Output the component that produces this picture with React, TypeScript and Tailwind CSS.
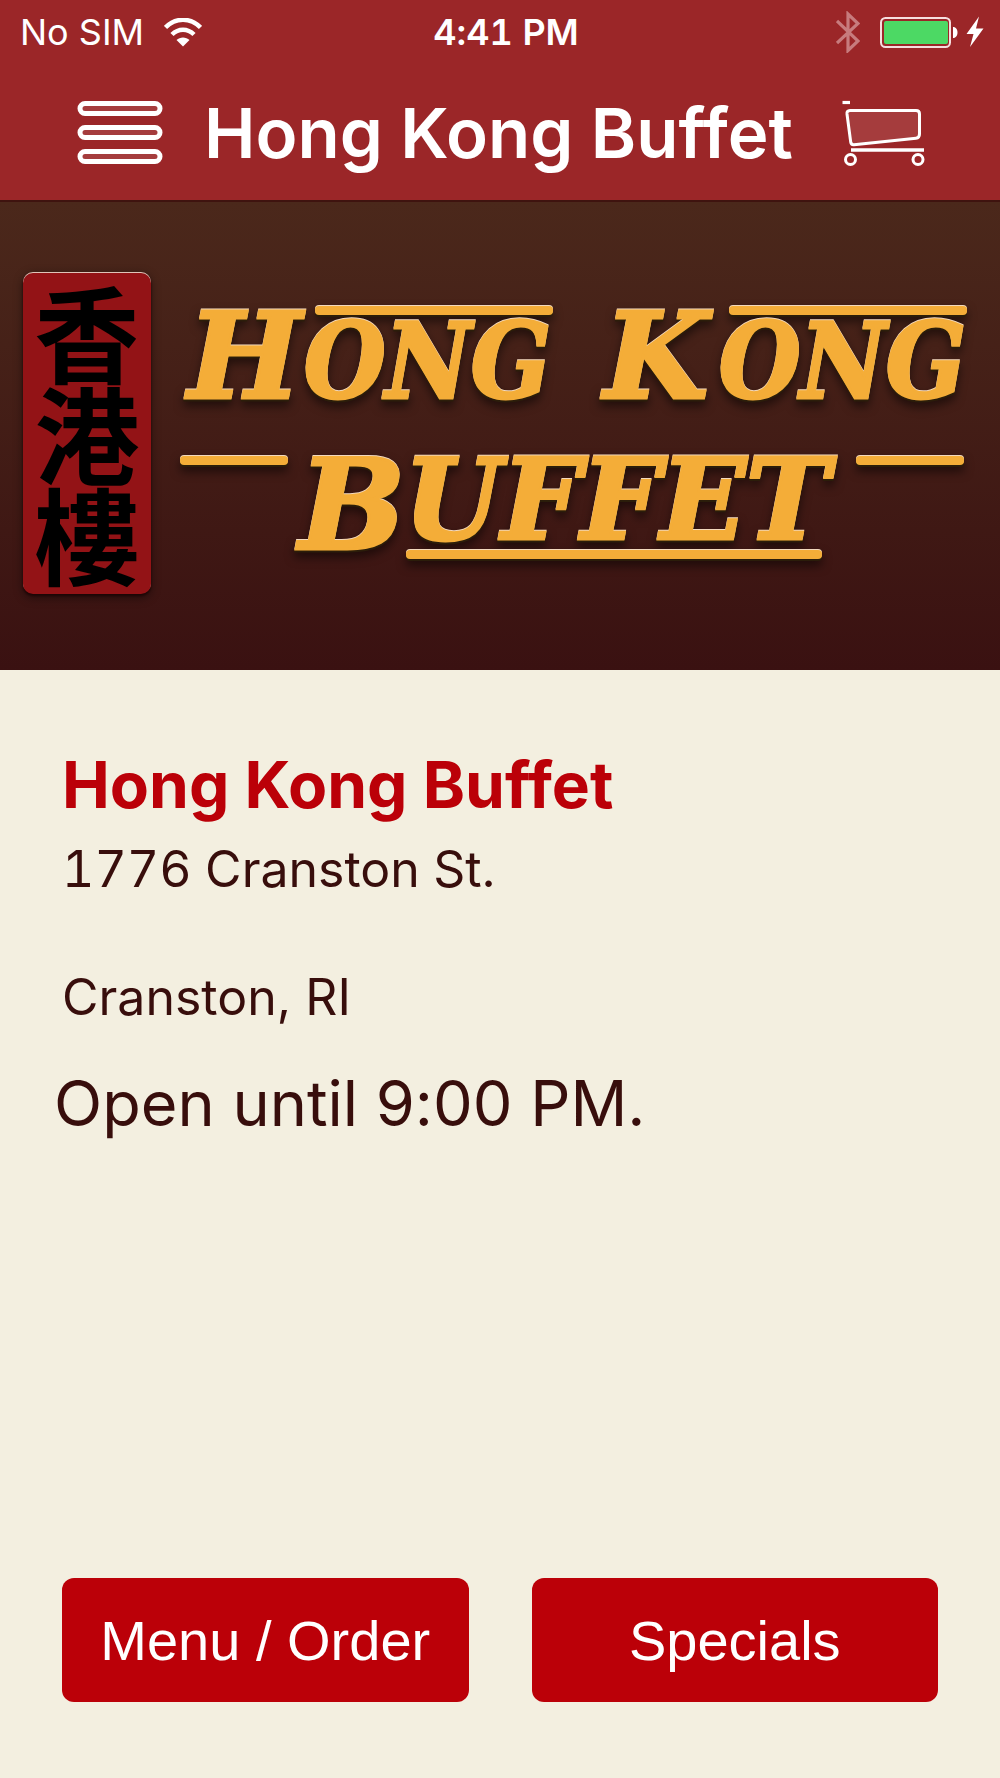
function WifiIcon() {
  return (
    <svg width="38" height="29" viewBox="0 0 38 29" fill="none" aria-label="Wi-Fi" role="img">
      <path d="M1.5 9.5C11.5 -0.8 26.500 -0.8 36.500 9.500" stroke="#fff" strokeWidth="4.500" />
      <path d="M8 16.500C14.500 10 23.500 10 30 16.500" stroke="#fff" strokeWidth="4.500" />
      <path d="M19 28.500L12.500 22C16 18.500 22 18.500 25.500 22Z" fill="#fff" />
    </svg>
  );
}

function BluetoothIcon() {
  return (
    <svg width="24" height="42" viewBox="0 0 24 42" fill="none" aria-label="Bluetooth" role="img">
      <path d="M1 10L22 30L12 39.500V3L22 12.500L1 32" stroke="#c77b7d" strokeWidth="3.200" />
    </svg>
  );
}

function BatteryIcon() {
  return (
    <svg width="78" height="32" viewBox="0 0 78 32" fill="none" aria-label="Battery full" role="img">
      <rect x="1" y="2" width="69" height="29" rx="4.500" stroke="#f6dfdf" strokeWidth="2" />
      <rect x="4" y="5" width="64" height="23" rx="2" fill="#4cd964" />
      <path d="M73 11C79 11 79 22 73 22Z" fill="#fff" />
    </svg>
  );
}

function BoltIcon() {
  return (
    <svg width="18" height="32" viewBox="0 0 18 32" aria-label="Charging" role="img">
      <path d="M13 0.500L0.500 18H7.500L4 31L17.500 12.500H10Z" fill="#fff" />
    </svg>
  );
}

function MenuIcon() {
  return (
    <svg width="86" height="64" viewBox="0 0 86 64" fill="#a53c3d" stroke="#fff" strokeWidth="5" aria-hidden="true">
      <rect x="3" y="3.500" width="80" height="10" rx="5" />
      <rect x="3" y="27.500" width="80" height="10" rx="5" />
      <rect x="3" y="51.500" width="80" height="10" rx="5" />
    </svg>
  );
}

function CartIcon() {
  return (
    <svg width="83" height="66" viewBox="0 0 83 66" fill="none" stroke="#fff" aria-hidden="true">
      <path d="M0.500 2.500H8" strokeWidth="3.200" />
      <path
        d="M8 10.500H74C76.500 10.500 77.500 12 77.500 14V34C77.500 37 76.500 38 74 38.300L12 44.700C10 44.900 9 44 8.700 42L5 14C4.800 12 5.500 10.500 8 10.500Z"
        fill="#a53c3d"
        strokeWidth="3"
      />
      <path d="M9 50H82" strokeWidth="3.400" />
      <circle cx="8.500" cy="59.500" r="5" strokeWidth="3" />
      <circle cx="76" cy="59.500" r="5" strokeWidth="3" />
    </svg>
  );
}

function Logo() {
  return (
    <svg viewBox="0 0 1000 468" className="block w-full" role="img" aria-label="香港樓 Hong Kong Buffet">
      <g className="[filter:drop-shadow(0_-1px_0_#e0c4b8)_drop-shadow(0_2px_1px_#1c0505)_drop-shadow(0_2px_5px_#00000066)]">
        <rect x="23" y="71" width="128" height="321" rx="10" fill="#931316" />
      </g>
      <g className="font-['Noto_Sans_CJK_TC',sans-serif] font-bold" fontSize="105" textAnchor="middle" fill="#000">
        <text x="87" y="173">香</text>
        <text x="87" y="274">港</text>
        <text x="87" y="375">樓</text>
      </g>
      <g
        className="font-['DejaVu_Serif',serif] font-bold italic [filter:drop-shadow(0_-1px_0_#f3d9bd)_drop-shadow(0_2px_0_#2b1d0a)_drop-shadow(0_5px_5px_#00000080)]"
        fill="#f4ad38"
      >
        <g stroke="#f4ad38" strokeWidth="3">
          <text x="188" y="196" fontSize="120">H</text>
          <text x="304" y="196" fontSize="104" className="font-['DejaVu_Serif_Condensed','DejaVu_Serif',serif]">ONG</text>
          <text x="604" y="196" fontSize="120">K</text>
          <text x="719" y="196" fontSize="104" className="font-['DejaVu_Serif_Condensed','DejaVu_Serif',serif]">ONG</text>
          <text x="299" y="347" fontSize="126">B</text>
          <text x="404" y="337" fontSize="112">UFFET</text>
        </g>
        <rect x="315" y="104" width="238" height="9" rx="4" />
        <rect x="729" y="104" width="238" height="9" rx="4" />
        <rect x="180" y="254" width="108" height="9" rx="4" />
        <rect x="856" y="254" width="108" height="9" rx="4" />
        <rect x="406" y="348" width="416" height="9" rx="4" />
      </g>
    </svg>
  );
}

export default function App() {
  return (
    <div className="flex min-h-screen flex-col bg-[#f3efe0] font-['Inter',sans-serif] text-[#380e0c] [font-variant-ligatures:none]">
      <header className="border-b-2 border-[#3f130f] bg-[#9b2628] text-white">
        <div className="grid h-16 grid-cols-[1fr_auto_1fr] items-center pr-4 pl-5 text-4xl">
          <div className="flex items-center gap-5">
            <span>No SIM</span>
            <WifiIcon />
          </div>
          <span className="pl-2 font-semibold tabular-nums">4:41 PM</span>
          <div className="flex items-center justify-end">
            <BluetoothIcon />
            <span className="ml-5 flex items-center gap-2">
              <BatteryIcon />
              <BoltIcon />
            </span>
          </div>
        </div>
        <div className="flex h-[136px] items-start justify-between pt-6 pr-[75px] pl-[77px]">
          <button type="button" aria-label="Open menu" className="mt-3">
            <MenuIcon />
          </button>
          <h1 className="pr-2 text-[69px] leading-[90px] font-semibold whitespace-nowrap">Hong Kong Buffet</h1>
          <button type="button" aria-label="Shopping cart" className="mt-3">
            <CartIcon />
          </button>
        </div>
      </header>

      <section className="bg-linear-to-b from-[#4b281b] to-[#3a1111]">
        <Logo />
      </section>

      <main className="flex flex-1 flex-col px-[62px] pt-[79px] pb-[76px]">
        <h2 className="text-[64px] leading-[72px] font-bold text-[#bb0008]">Hong Kong Buffet</h2>
        <address className="text-[50px] leading-[64px] not-italic">
          <p className="pt-4 tabular-nums">1776 Cranston St.</p>
          <p className="pt-16">Cranston, RI</p>
        </address>
        <p className="-ml-2 pt-[34px] text-[63px] leading-[80px]">Open until 9:00 PM.</p>
        <nav className="mt-auto grid grid-cols-2 gap-[63px] font-['Liberation_Sans',sans-serif] text-[56px] text-white">
          <button type="button" className="h-[124px] rounded-xl bg-[#bb0008] pt-0.5">Menu / Order</button>
          <button type="button" className="h-[124px] rounded-xl bg-[#bb0008] pt-0.5">Specials</button>
        </nav>
      </main>
    </div>
  );
}
